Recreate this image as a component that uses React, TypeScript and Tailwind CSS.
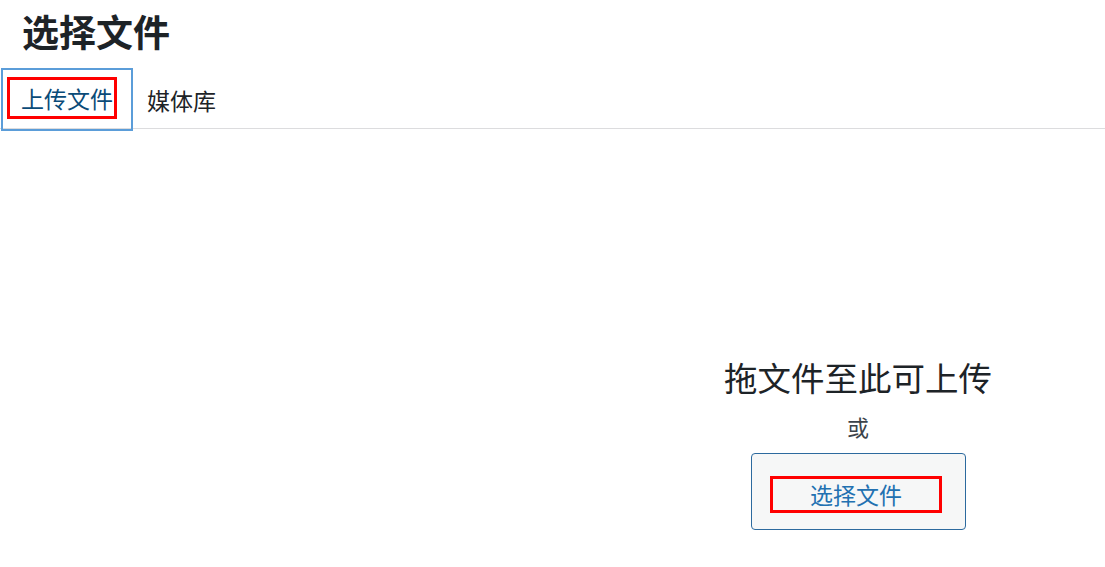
export default function App() {
  const font = { fontFamily: '"Noto Sans CJK SC", "Noto Sans", sans-serif' };
  return (
    <div className="h-[567px] w-[1105px] overflow-hidden bg-white text-[#1d2327]" style={font}>
      <h1 className="h-[66px] pl-[22px] pt-[6px] text-[37px] font-bold leading-[50px]">选择文件</h1>

      <div className="flex h-[63px] items-start border-b border-[#dcdcde]">
        <div className="ml-[1px] mt-[2px] flex h-[63px] w-[132px] items-start border-2 border-[#5b9dd9] pl-[4px] pt-[7px]">
          <span className="flex h-[42px] w-[110px] items-center justify-end border-[3px] border-[#ff0000] pr-[1px] text-[23px] leading-none text-[#0a4b78]">
            上传文件
          </span>
        </div>
        <span className="ml-[14px] mt-[19px] text-[23px] leading-[30px] text-[#1d2327]">媒体库</span>
      </div>

      <div className="flex pl-[611px]">
        <div className="flex flex-1 flex-col items-center pt-[226px]">
          <p className="text-[33.5px] leading-[44px] text-[#1d2327]">拖文件至此可上传</p>
          <p className="mt-[12px] text-[22px] leading-[30px] text-[#3c434a]">或</p>
          <button className="mt-[12px] flex h-[77px] w-[215px] items-start justify-center rounded-[4px] border border-[#2c6a9e] bg-[#f6f7f7] pt-[22px]">
            <span className="mr-[4px] flex h-[37px] w-[172px] items-center justify-center border-[3px] border-[#ff0000] text-[23px] leading-none text-[#2271b1]">
              选择文件
            </span>
          </button>
        </div>
      </div>
    </div>
  );
}
